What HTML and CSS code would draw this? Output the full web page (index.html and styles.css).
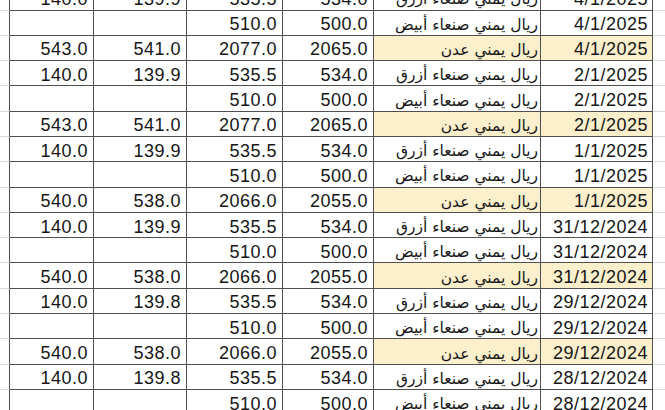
FILE: index.html
```html
<!DOCTYPE html>
<html lang="ar">
<head>
<meta charset="utf-8">
<title>Exchange rates</title>
<link rel="stylesheet" href="styles.css">
</head>
<body>
<div class="sheet">
  <div class="row"><div class="g"></div><div class="c n">140.0</div><div class="c n">139.9</div><div class="c n">535.5</div><div class="c n">534.0</div><div class="c t"><span dir="rtl">ريال يمني صنعاء أزرق</span></div><div class="c d">4/1/2025</div><div class="r"></div></div>
  <div class="row"><div class="g"></div><div class="c n"></div><div class="c n"></div><div class="c n">510.0</div><div class="c n">500.0</div><div class="c t"><span dir="rtl">ريال يمني صنعاء أبيض</span></div><div class="c d">4/1/2025</div><div class="r"></div></div>
  <div class="row"><div class="g"></div><div class="c n">543.0</div><div class="c n">541.0</div><div class="c n">2077.0</div><div class="c n">2065.0</div><div class="c t hl"><span dir="rtl">ريال يمني عدن</span></div><div class="c d hl">4/1/2025</div><div class="r"></div></div>
  <div class="row"><div class="g"></div><div class="c n">140.0</div><div class="c n">139.9</div><div class="c n">535.5</div><div class="c n">534.0</div><div class="c t"><span dir="rtl">ريال يمني صنعاء أزرق</span></div><div class="c d">2/1/2025</div><div class="r"></div></div>
  <div class="row"><div class="g"></div><div class="c n"></div><div class="c n"></div><div class="c n">510.0</div><div class="c n">500.0</div><div class="c t"><span dir="rtl">ريال يمني صنعاء أبيض</span></div><div class="c d">2/1/2025</div><div class="r"></div></div>
  <div class="row"><div class="g"></div><div class="c n">543.0</div><div class="c n">541.0</div><div class="c n">2077.0</div><div class="c n">2065.0</div><div class="c t hl"><span dir="rtl">ريال يمني عدن</span></div><div class="c d hl">2/1/2025</div><div class="r"></div></div>
  <div class="row"><div class="g"></div><div class="c n">140.0</div><div class="c n">139.9</div><div class="c n">535.5</div><div class="c n">534.0</div><div class="c t"><span dir="rtl">ريال يمني صنعاء أزرق</span></div><div class="c d">1/1/2025</div><div class="r"></div></div>
  <div class="row"><div class="g"></div><div class="c n"></div><div class="c n"></div><div class="c n">510.0</div><div class="c n">500.0</div><div class="c t"><span dir="rtl">ريال يمني صنعاء أبيض</span></div><div class="c d">1/1/2025</div><div class="r"></div></div>
  <div class="row"><div class="g"></div><div class="c n">540.0</div><div class="c n">538.0</div><div class="c n">2066.0</div><div class="c n">2055.0</div><div class="c t hl"><span dir="rtl">ريال يمني عدن</span></div><div class="c d hl">1/1/2025</div><div class="r"></div></div>
  <div class="row"><div class="g"></div><div class="c n">140.0</div><div class="c n">139.9</div><div class="c n">535.5</div><div class="c n">534.0</div><div class="c t"><span dir="rtl">ريال يمني صنعاء أزرق</span></div><div class="c d">31/12/2024</div><div class="r"></div></div>
  <div class="row"><div class="g"></div><div class="c n"></div><div class="c n"></div><div class="c n">510.0</div><div class="c n">500.0</div><div class="c t"><span dir="rtl">ريال يمني صنعاء أبيض</span></div><div class="c d">31/12/2024</div><div class="r"></div></div>
  <div class="row"><div class="g"></div><div class="c n">540.0</div><div class="c n">538.0</div><div class="c n">2066.0</div><div class="c n">2055.0</div><div class="c t hl"><span dir="rtl">ريال يمني عدن</span></div><div class="c d hl">31/12/2024</div><div class="r"></div></div>
  <div class="row"><div class="g"></div><div class="c n">140.0</div><div class="c n">139.8</div><div class="c n">535.5</div><div class="c n">534.0</div><div class="c t"><span dir="rtl">ريال يمني صنعاء أزرق</span></div><div class="c d">29/12/2024</div><div class="r"></div></div>
  <div class="row"><div class="g"></div><div class="c n"></div><div class="c n"></div><div class="c n">510.0</div><div class="c n">500.0</div><div class="c t"><span dir="rtl">ريال يمني صنعاء أبيض</span></div><div class="c d">29/12/2024</div><div class="r"></div></div>
  <div class="row"><div class="g"></div><div class="c n">540.0</div><div class="c n">538.0</div><div class="c n">2066.0</div><div class="c n">2055.0</div><div class="c t hl"><span dir="rtl">ريال يمني عدن</span></div><div class="c d hl">29/12/2024</div><div class="r"></div></div>
  <div class="row"><div class="g"></div><div class="c n">140.0</div><div class="c n">139.8</div><div class="c n">535.5</div><div class="c n">534.0</div><div class="c t"><span dir="rtl">ريال يمني صنعاء أزرق</span></div><div class="c d">28/12/2024</div><div class="r"></div></div>
  <div class="row"><div class="g"></div><div class="c n"></div><div class="c n"></div><div class="c n">510.0</div><div class="c n">500.0</div><div class="c t"><span dir="rtl">ريال يمني صنعاء أبيض</span></div><div class="c d">28/12/2024</div><div class="r"></div></div>
</div>
</body>
</html>
```
FILE: styles.css
```css
html, body {
  margin: 0;
  padding: 0;
  background: #ffffff;
  overflow: hidden;
}

.sheet {
  margin-top: -14.8px;
  font-family: "Liberation Sans", Arial, "DejaVu Sans", sans-serif;
  font-size: 18px;
  letter-spacing: 0.5px;
  color: #161616;
}

.row {
  display: grid;
  grid-template-columns: 10px 84px 93px 96px 91px 167px 112px 1fr;
  height: 25.3px;
}

.row > div {
  box-sizing: border-box;
  border-bottom: 1px solid #505050;
}

.g {
  border-right: 1px solid #505050;
  border-bottom-color: #d8d8d8 !important;
}

.r {
  border-bottom-color: #d8d8d8 !important;
}

.c {
  border-right: 1px solid #505050;
  display: flex;
  align-items: center;
  justify-content: flex-end;
  padding: 4px 5px 0 0;
  white-space: nowrap;
  overflow: hidden;
}

.d {
  padding-right: 4px;
}

.t {
  padding-right: 2px;
  font-family: "DejaVu Sans", sans-serif;
  letter-spacing: 0;
  font-size: 15.5px;
}

.hl {
  background: #fcefcc;
}
```
